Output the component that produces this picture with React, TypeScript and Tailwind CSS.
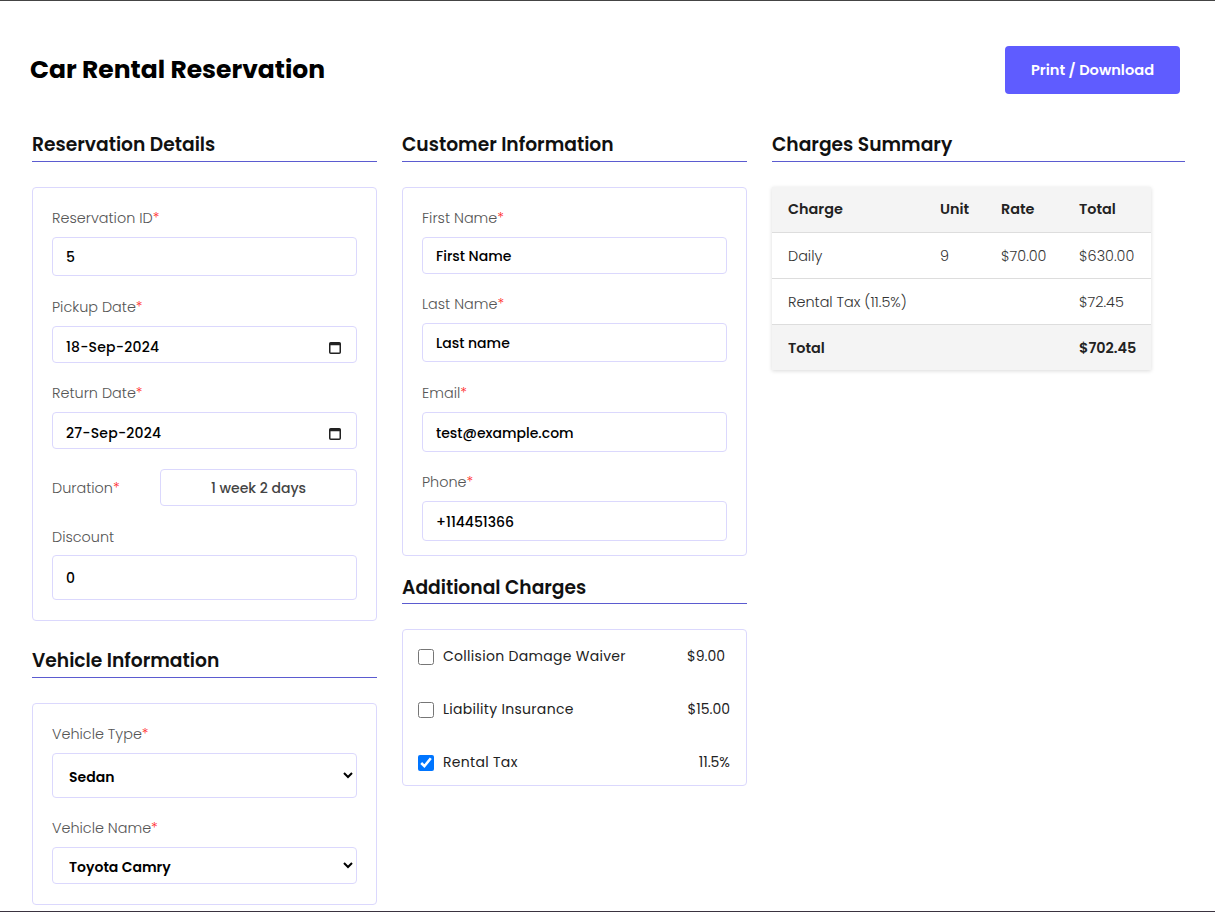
import React from 'react'

const font = {fontFamily: 'Poppins, Inter, "Noto Sans", sans-serif'}

function Label({text, required = true}: {text: string, required?: boolean}) {
  return (
    <div className="pt-[2px] text-[14.4px] leading-[21px] font-light text-[#555]">
      {text}{required && <span className="text-[#ff2a2a]">*</span>}
    </div>
  )
}

function TextField({value, h}: {value: string, h: string}) {
  return (
    <input
      readOnly
      value={value}
      className={`w-full ${h} rounded-[4px] border border-[#dbd8fd] px-[13px] pt-[2px] text-[14px] font-medium text-black outline-none`}
    />
  )
}

function DateField({value}: {value: string}) {
  return (
    <div className="flex h-[37px] w-full items-center justify-between rounded-[4px] border border-[#dbd8fd] pl-[13px] pr-[15px] pt-[5px] text-[14px] font-medium text-black">
      <span className="tracking-[0.2px]">{value}</span>
      <svg width="12" height="13" viewBox="0 0 12 13" className="text-[#222]">
        <rect x="0.75" y="1.75" width="10.5" height="10.5" rx="1" fill="none" stroke="currentColor" strokeWidth="1.5"/>
        <rect x="0.75" y="1.75" width="10.5" height="2.5" fill="currentColor"/>
      </svg>
    </div>
  )
}

function SelectField({value, h}: {value: string, h: string}) {
  return (
    <select
      defaultValue={value}
      className={`w-full ${h} rounded-[4px] border border-[#dbd8fd] bg-white pl-[12px] pr-[6px] pt-[3px] text-[14px] font-semibold text-black outline-none`}
    >
      <option>{value}</option>
    </select>
  )
}

function Heading({children, className = ''}: {children: React.ReactNode, className?: string}) {
  return (
    <h2 className={`border-b border-[#5b5bd0] pt-[1px] text-[18.7px] leading-[27px] font-semibold text-[#111] ${className}`}>
      {children}
    </h2>
  )
}

function ChargeRow({label, price, checked = false, priceClass = ''}: {label: string, price: string, checked?: boolean, priceClass?: string}) {
  return (
    <label className="flex h-[21px] items-center text-[14px] text-[#222]">
      <input type="checkbox" defaultChecked={checked} className="h-4 w-4"/>
      <span className="ml-[9px] tracking-[0.3px]">{label}</span>
      <span className={`ml-auto ${priceClass}`}>{price}</span>
    </label>
  )
}

export default function App() {
  return (
    <div style={font} className="h-[912px] overflow-hidden border-y border-t-[#444] border-b-[#3a3340] bg-white">

      <header className="flex items-center justify-between pl-[30px] pr-[35px] pt-[45px]">
        <h1 className="text-[25px] leading-[36px] font-bold text-black">Car Rental Reservation</h1>
        <button className="h-[48px] w-[175px] rounded-[4px] bg-[#5f5cff] pt-[2px] text-[14.6px] font-semibold text-white">
          Print / Download
        </button>
      </header>

      <div className="mt-[36px] flex items-start gap-[25px] pl-[32px] pr-[30px]">

        <section className="w-[345px] shrink-0">
          <Heading className="pb-[3px]">Reservation Details</Heading>
          <div className="mt-[25px] rounded-[4px] border border-[#dbd8fd] px-[19px] pt-[18px] pb-[20px]">
            <Label text="Reservation ID"/>
            <div className="mt-[8px]"><TextField value="5" h="h-[39px]"/></div>

            <div className="mt-[19px]"><Label text="Pickup Date"/></div>
            <div className="mt-[8px]"><DateField value="18-Sep-2024"/></div>

            <div className="mt-[18px]"><Label text="Return Date"/></div>
            <div className="mt-[8px]"><DateField value="27-Sep-2024"/></div>

            <div className="mt-[20px] flex items-center">
              <div className="w-[108px]"><Label text="Duration"/></div>
              <div className="flex h-[37px] flex-1 items-center justify-center rounded-[4px] border border-[#dbd8fd] pt-[1px] text-[14px] font-medium text-[#444]">
                1 week 2 days
              </div>
            </div>

            <div className="mt-[19px]"><Label text="Discount" required={false}/></div>
            <div className="mt-[7px]"><TextField value="0" h="h-[45px]"/></div>
          </div>

          <Heading className="mt-[25px] pb-[3px]">Vehicle Information</Heading>
          <div className="mt-[25px] rounded-[4px] border border-[#dbd8fd] px-[19px] pt-[18px] pb-[20px]">
            <Label text="Vehicle Type"/>
            <div className="mt-[8px]"><SelectField value="Sedan" h="h-[45px]"/></div>
            <div className="mt-[18px]"><Label text="Vehicle Name"/></div>
            <div className="mt-[8px]"><SelectField value="Toyota Camry" h="h-[37px]"/></div>
          </div>
        </section>

        <section className="w-[345px] shrink-0">
          <Heading className="pb-[3px]">Customer Information</Heading>
          <div className="mt-[25px] rounded-[4px] border border-[#dbd8fd] px-[19px] pt-[18px] pb-[14px]">
            <Label text="First Name"/>
            <div className="mt-[8px]"><TextField value="First Name" h="h-[37px]"/></div>
            <div className="mt-[18px]"><Label text="Last Name"/></div>
            <div className="mt-[8px]"><TextField value="Last name" h="h-[39px]"/></div>
            <div className="mt-[19px]"><Label text="Email"/></div>
            <div className="mt-[8px]"><TextField value="test@example.com" h="h-[40px]"/></div>
            <div className="mt-[18px]"><Label text="Phone"/></div>
            <div className="mt-[8px]"><TextField value="+114451366" h="h-[40px]"/></div>
          </div>

          <Heading className="mt-[17px] pb-[2px]">Additional Charges</Heading>
          <div className="mt-[25px] flex flex-col gap-[32px] rounded-[4px] border border-[#dbd8fd] pl-[15px] pr-[16px] pt-[16px] pb-[12px]">
            <ChargeRow label="Collision Damage Waiver" price="$9.00" priceClass="mr-[5px]"/>
            <ChargeRow label="Liability Insurance" price="$15.00"/>
            <ChargeRow label="Rental Tax" price="11.5%" checked/>
          </div>
        </section>

        <section className="min-w-0 flex-1">
          <Heading className="pb-[3px]">Charges Summary</Heading>
          <table className="mt-[25px] w-[379px] table-fixed border-collapse text-left text-[14.4px] text-[#333] shadow-[0_1px_4px_rgba(0,0,0,0.15)]">
            <colgroup>
              <col className="w-[152px]"/>
              <col className="w-[61px]"/>
              <col className="w-[78px]"/>
              <col className="w-[88px]"/>
            </colgroup>
            <thead>
              <tr className="h-[45px] border-b border-[#ddd] bg-[#f4f4f4] text-[#222]">
                <th className="pl-4 pt-[2px] font-semibold">Charge</th>
                <th className="pl-4 pt-[2px] font-semibold">Unit</th>
                <th className="pl-4 pt-[2px] font-semibold">Rate</th>
                <th className="pl-4 pt-[2px] font-semibold">Total</th>
              </tr>
            </thead>
            <tbody className="font-light">
              <tr className="h-[46px] border-b border-[#ddd]">
                <td className="pl-4 pt-[3px]">Daily</td>
                <td className="pl-4 pt-[3px]">9</td>
                <td className="pl-4 pt-[3px]">$70.00</td>
                <td className="pl-4 pt-[3px]">$630.00</td>
              </tr>
              <tr className="h-[46px] border-b border-[#ddd]">
                <td className="pl-4 pt-[3px] whitespace-nowrap">Rental Tax (11.5%)</td>
                <td className="pl-4 pt-[3px]"></td>
                <td className="pl-4 pt-[3px]"></td>
                <td className="pl-4 pt-[3px]">$72.45</td>
              </tr>
              <tr className="h-[46px] bg-[#f4f4f4] font-semibold text-[#222]">
                <td className="pl-4 pt-[3px]">Total</td>
                <td className="pl-4 pt-[3px]"></td>
                <td className="pl-4 pt-[3px]"></td>
                <td className="pl-4 pt-[3px]">$702.45</td>
              </tr>
            </tbody>
          </table>
        </section>

      </div>
    </div>
  )
}
